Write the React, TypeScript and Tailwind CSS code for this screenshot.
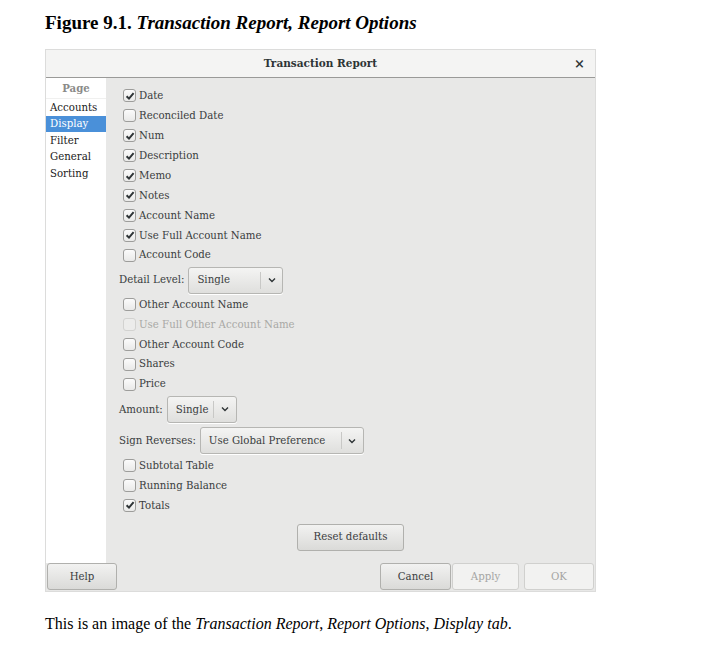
import React from "react";

const serif = { fontFamily: '"DejaVu Serif", serif' };

function Check({ checked, disabled }: { checked?: boolean; disabled?: boolean }) {
  return (
    <span
      className={`w-[13px] h-[13px] rounded-[3px] border flex items-center justify-center shrink-0 ${
        disabled
          ? "border-[#d2d2d0] bg-[#ececeb]"
          : "border-[#9d9d9b] bg-gradient-to-b from-[#fbfbfb] to-[#e9e9e8]"
      }`}
    >
      {checked && (
        <svg width="10" height="10" viewBox="0 0 10 10">
          <path d="M1.6 5.2 L4 7.6 L8.6 2.2" fill="none" stroke="#2e3436" strokeWidth="2" />
        </svg>
      )}
    </span>
  );
}

function Row({ label, checked, disabled }: { label: string; checked?: boolean; disabled?: boolean }) {
  return (
    <div className="h-[19.9px] flex items-center gap-[3px] ml-[4px]">
      <Check checked={checked} disabled={disabled} />
      <span className={disabled ? "text-[#a8a8a6]" : "text-[#3a3d3e]"}>{label}</span>
    </div>
  );
}

function Combo({ value, width, split }: { value: string; width: string; split: string }) {
  return (
    <div
      className={`${width} h-[27px] flex items-center rounded-[3px] border border-[#b6b6b3] bg-gradient-to-b from-[#f4f4f3] to-[#dfdfdd] shadow-[0_1px_0_#fff]`}
    >
      <span className={`${split} pl-[8px] text-[#3a3d3e] border-r border-[#c8c8c6] h-[17px] flex items-center`}>
        {value}
      </span>
      <span className="flex-1 flex justify-center">
        <svg width="8" height="6" viewBox="0 0 8 6">
          <path d="M1 1.5 L4 4.5 L7 1.5" fill="none" stroke="#2e3436" strokeWidth="1.4" />
        </svg>
      </span>
    </div>
  );
}

function Button({ label, width, disabled }: { label: string; width: string; disabled?: boolean }) {
  return (
    <div
      className={`${width} h-[27px] flex items-center justify-center rounded-[3px] border ${
        disabled
          ? "border-[#d0d0ce] bg-[#f2f2f1] text-[#a5a5a3]"
          : "border-[#b0b0ad] bg-gradient-to-b from-[#f2f2f1] to-[#dadad8] text-[#3a3d3e]"
      }`}
    >
      {label}
    </div>
  );
}

export default function App() {
  const top = [
    { label: "Date", checked: true },
    { label: "Reconciled Date" },
    { label: "Num", checked: true },
    { label: "Description", checked: true },
    { label: "Memo", checked: true },
    { label: "Notes", checked: true },
    { label: "Account Name", checked: true },
    { label: "Use Full Account Name", checked: true },
    { label: "Account Code" },
  ];
  const middle = [
    { label: "Other Account Name" },
    { label: "Use Full Other Account Name", disabled: true },
    { label: "Other Account Code" },
    { label: "Shares" },
    { label: "Price" },
  ];
  const pages = ["Accounts", "Display", "Filter", "General", "Sorting"];

  return (
    <div className="w-[708px] h-[646px] bg-white relative">
      <div className="pl-[45px] pt-[11px]" style={{ fontFamily: '"Liberation Serif", serif' }}>
        <h1 className="text-[19px] font-bold text-black leading-[24px]">
          Figure 9.1. <i>Transaction Report, Report Options</i>
        </h1>
      </div>

      {/* Dialog */}
      <div
        className="ml-[45px] mt-[14px] w-[551px] h-[543px] flex flex-col bg-[#e8e8e7] border border-[#dcdcdb] text-[10.2px]"
        style={serif}
      >
        <div className="h-[28px] bg-[#f4f4f3] border-b border-[#9a9a98] relative flex items-center justify-center shrink-0">
          <span className="font-bold text-[#2e3436] text-[10.5px]">Transaction Report</span>
          <span className="absolute right-[10px] top-[4px] text-[13px] font-bold text-[#2e3436]">×</span>
        </div>

        <div className="flex flex-1">
          <div className="w-[60px] bg-white flex flex-col">
            <div className="h-[21px] pt-[1px] flex items-center justify-center font-bold text-[#8a8a88] border-b border-[#f0f0ef]">
              Page
            </div>
            {pages.map((p) => (
              <div
                key={p}
                className={`h-[16.6px] flex items-center pl-[4px] ${
                  p === "Display" ? "bg-[#4a90d9] text-white" : "text-[#1a1a1a]"
                }`}
              >
                {p}
              </div>
            ))}
          </div>

          <div className="flex-1 flex flex-col pl-[13px] pt-[8px]">
            {top.map((r) => (
              <Row key={r.label} {...r} />
            ))}
            <div className="flex items-center gap-[4px] mt-[1.5px] mb-[1px] text-[#3a3d3e]">
              <span>Detail Level:</span>
              <Combo value="Single" width="w-[95px]" split="w-[72px]" />
            </div>
            {middle.map((r) => (
              <Row key={r.label} {...r} />
            ))}
            <div className="flex items-center gap-[4px] mt-[2px] text-[#3a3d3e]">
              <span>Amount:</span>
              <Combo value="Single" width="w-[70px]" split="w-[46px]" />
            </div>
            <div className="flex items-center gap-[4px] mt-[4.5px] mb-[1px] text-[#3a3d3e]">
              <span>Sign Reverses:</span>
              <Combo value="Use Global Preference" width="w-[164px]" split="w-[141px]" />
            </div>
            <Row label="Subtotal Table" />
            <Row label="Running Balance" />
            <Row label="Totals" checked />
            <div className="flex justify-center mt-[8.5px] pr-[13px]">
              <Button label="Reset defaults" width="w-[107px]" />
            </div>
          </div>
        </div>

        <div className="h-[28px] flex items-start justify-between px-[1px] shrink-0">
          <Button label="Help" width="w-[70px]" />
          <div className="flex gap-[1px]">
            <Button label="Cancel" width="w-[71px]" />
            <Button label="Apply" width="w-[67px]" disabled />
            <div className="w-[3px]" />
            <Button label="OK" width="w-[70px]" disabled />
          </div>
        </div>
      </div>

      <p className="pl-[45px] mt-[20px] text-[16px] text-black" style={{ fontFamily: '"Liberation Serif", serif' }}>
        This is an image of the <i>Transaction Report</i>, <i>Report Options</i>, <i>Display tab</i>.
      </p>
    </div>
  );
}
